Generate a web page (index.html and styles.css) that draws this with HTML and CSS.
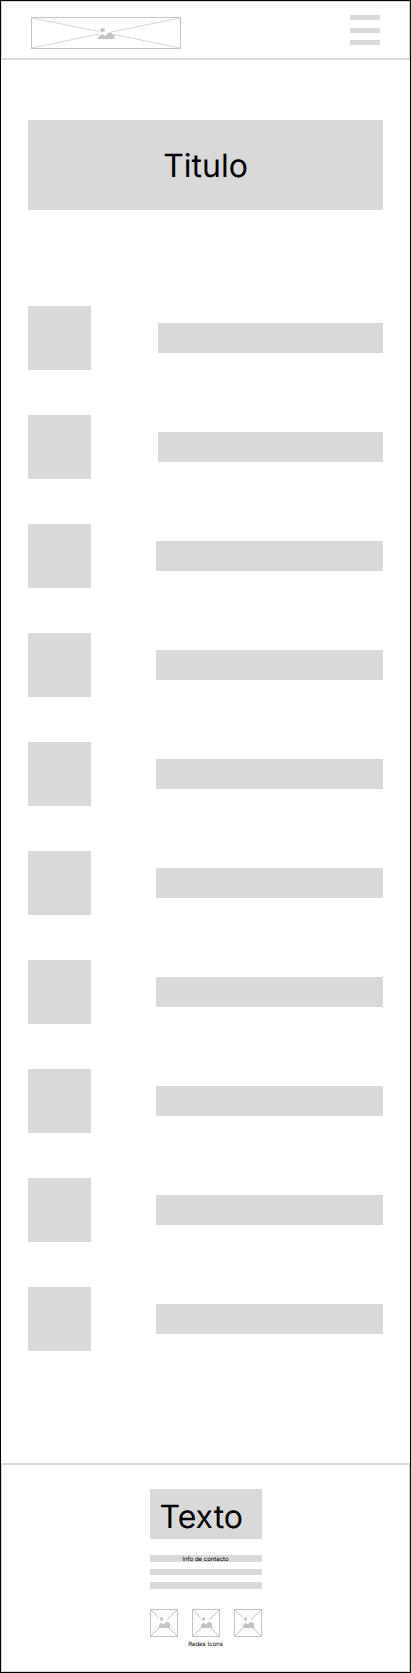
FILE: index.html
```html
<!DOCTYPE html>
<html lang="es">
<head>
<meta charset="utf-8">
<meta name="viewport" content="width=device-width, initial-scale=1">
<title>Titulo</title>
<link rel="stylesheet" href="styles.css">
</head>
<body>
<div class="page">
  <header class="header">
    <a class="logo" href="#" aria-label="Inicio">
      <svg class="logo-image" viewBox="0 0 150 32" fill="none" stroke="#c4c4c4">
        <rect x="0.5" y="0.5" width="149" height="31"/>
        <path d="M1 1 68 14.500M149 1 80 15M1 31 68 17M149 31 83 17.500" stroke="#d6d6d6"/>
        <g fill="#c4c4c4" stroke="none">
          <ellipse cx="71.500" cy="13" rx="2.500" ry="2"/>
          <path d="M67 22v-1.500l3-3h2l2 1.500 4-3.500h2l2 2h1.500v4.500z"/>
        </g>
      </svg>
    </a>
    <button class="menu" type="button" aria-label="Menu">
      <span class="menu-line"></span>
      <span class="menu-line"></span>
      <span class="menu-line"></span>
    </button>
  </header>
  <main class="main">
    <h1 class="title">Titulo</h1>
    <ul class="list">
      <li class="item item-short"><span class="thumb"></span><span class="bar"></span></li>
      <li class="item item-short"><span class="thumb"></span><span class="bar"></span></li>
      <li class="item"><span class="thumb"></span><span class="bar"></span></li>
      <li class="item"><span class="thumb"></span><span class="bar"></span></li>
      <li class="item"><span class="thumb"></span><span class="bar"></span></li>
      <li class="item"><span class="thumb"></span><span class="bar"></span></li>
      <li class="item"><span class="thumb"></span><span class="bar"></span></li>
      <li class="item"><span class="thumb"></span><span class="bar"></span></li>
      <li class="item"><span class="thumb"></span><span class="bar"></span></li>
      <li class="item"><span class="thumb"></span><span class="bar"></span></li>
    </ul>
  </main>
  <footer class="footer">
    <svg class="symbols" aria-hidden="true">
      <symbol id="picture" viewBox="0 0 28 28">
        <rect x="0.500" y="0.500" width="27" height="27" fill="none" stroke="#c4c4c4"/>
        <path d="M1 1l8 8M27 1 17 11M1 27l8-8M27 27l-8-8" fill="none" stroke="#c4c4c4"/>
        <g fill="#c4c4c4">
          <circle cx="11.500" cy="10" r="1.800"/>
          <path d="M9 19v-3l2-2h1l2 1.500 2-2.500h2l1 1h1v5z"/>
        </g>
      </symbol>
    </svg>
    <p class="brand">Texto</p>
    <div class="contact">
      <span class="contact-line">Info de contacto</span>
      <span class="contact-line"></span>
      <span class="contact-line"></span>
    </div>
    <nav class="social" aria-label="Redes">
      <a class="social-link" href="#" aria-label="Red 1"><svg class="social-icon"><use href="#picture"/></svg></a>
      <a class="social-link" href="#" aria-label="Red 2"><svg class="social-icon"><use href="#picture"/></svg></a>
      <a class="social-link" href="#" aria-label="Red 3"><svg class="social-icon"><use href="#picture"/></svg></a>
    </nav>
    <p class="caption">Redes Icons</p>
  </footer>
</div>
</body>
</html>
```

FILE: styles.css
```css
* {
  box-sizing: border-box;
}

body {
  margin: 0;
  background: #fff;
  color: #000;
  font-family: Inter, "Liberation Sans", sans-serif;
  font-optical-sizing: none;
  text-rendering: geometricPrecision;
}

.page {
  border: 1px solid #000;
}

.header {
  display: flex;
  align-items: center;
  justify-content: space-between;
  padding: 9px 29px;
  border: 1px solid #d9d9d9;
  border-bottom-width: 2px;
}

.logo {
  display: block;
  padding-top: 6px;
}

.logo-image {
  display: block;
  width: 150px;
  height: 32px;
}

.menu {
  display: flex;
  flex-direction: column;
  justify-content: space-between;
  width: 30px;
  height: 30px;
  padding: 0;
  border: 0;
  background: none;
}

.menu-line {
  width: 100%;
  height: 5px;
  background: #d9d9d9;
}

.main {
  padding: 60px 27px 112px;
}

.title {
  display: flex;
  align-items: center;
  justify-content: center;
  height: 90px;
  margin: 0 0 96px;
  background: #d9d9d9;
  font-size: 32px;
  font-weight: 400;
}

.list {
  display: grid;
  gap: 45px;
  margin: 0;
  padding: 0;
  list-style: none;
}

.item {
  display: flex;
  align-items: center;
  gap: 65px;
}

.item-short {
  gap: 67px;
}

.thumb {
  width: 63px;
  height: 64px;
  background: #d9d9d9;
}

.bar {
  flex: 1;
  height: 30px;
  background: #d9d9d9;
}

.footer {
  display: flex;
  flex-direction: column;
  align-items: center;
  padding: 24px 0 22px;
  border: 1px solid #d9d9d9;
  border-top-width: 2px;
}

.symbols {
  display: none;
}

.brand {
  width: 112px;
  margin: 0 0 16px;
  padding: 8px 0 2px 10px;
  background: #d9d9d9;
  font-size: 32px;
  line-height: 40px;
}

.contact {
  display: grid;
  grid-template-rows: 7px 6px 7px;
  gap: 7px;
  width: 112px;
  margin-bottom: 20px;
}

.contact-line {
  background: #d9d9d9;
  font-size: 6px;
  line-height: 10px;
  text-align: center;
}

.social {
  display: flex;
  gap: 14px;
}

.social-link,
.social-icon {
  display: block;
  width: 28px;
  height: 28px;
}

.caption {
  margin: 4px 0 0;
  font-size: 6px;
  line-height: 8px;
}
```
